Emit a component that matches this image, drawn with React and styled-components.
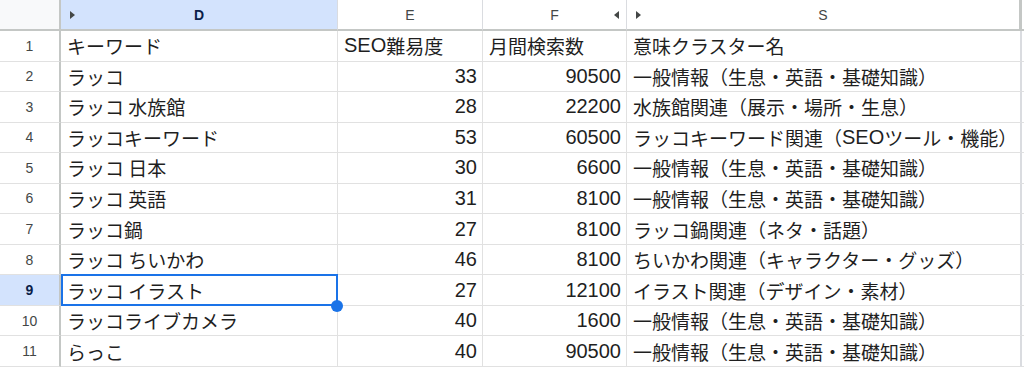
import React from "react";
import styled, { createGlobalStyle, css } from "styled-components";

const Global = createGlobalStyle`
  html, body { margin: 0; padding: 0; background: #fff; }
  body { overflow: hidden; }
  * { box-sizing: border-box; }
`;

const Sheet = styled.div`
  display: grid;
  grid-template-columns: 61px 277px 145px 144px 395px 1fr;
  grid-template-rows: 31px repeat(11, 1fr);
  width: 1024px;
  height: 367px;
  font-family: "Noto Sans CJK JP", "Liberation Sans", sans-serif;
  color: #1f1f1f;
  overflow: hidden;
`;

const Corner = styled.div`
  background: #f8f9fa;
  border-right: 2px solid #c4c7c5;
  border-bottom: 2px solid #c4c7c5;
`;

const ColHead = styled.div`
  position: relative;
  display: flex;
  align-items: center;
  justify-content: center;
  font-family: "Liberation Sans", Arial, sans-serif;
  font-size: 14px;
  color: #444746;
  background: #fff;
  border-right: 1px solid #dadce0;
  border-bottom: 2px solid #c4c7c5;
  ${(p) =>
    p.$active &&
    css`
      background: #d3e3fd;
      color: #0b1e49;
      font-weight: bold;
    `}
  ${(p) =>
    p.$edge &&
    css`
      border-right: 3px solid #c4c7c5;
    `}
`;

const Arrow = styled.span`
  position: absolute;
  top: 50%;
  margin-top: -4px;
  width: 0;
  height: 0;
  border-top: 4px solid transparent;
  border-bottom: 4px solid transparent;
  ${(p) =>
    p.$dir === "right"
      ? css`
          left: 9px;
          border-left: 5px solid #444746;
        `
      : css`
          right: 7px;
          border-right: 5px solid #444746;
        `}
`;

const RowHead = styled.div`
  display: flex;
  align-items: center;
  justify-content: center;
  font-family: "Liberation Sans", Arial, sans-serif;
  font-size: 14px;
  color: #444746;
  background: #fff;
  border-right: 2px solid #c4c7c5;
  border-bottom: 1px solid #e1e1e1;
  ${(p) =>
    p.$active &&
    css`
      background: #d3e3fd;
      color: #0b1e49;
      font-weight: bold;
    `}
`;

const Cell = styled.div`
  position: relative;
  display: flex;
  align-items: center;
  justify-content: ${(p) => (p.$num ? "flex-end" : "flex-start")};
  padding: 0 5px 0 6px;
  font-size: ${(p) => (p.$num ? "20px" : "19px")};
  font-family: ${(p) =>
    p.$num
      ? `"Liberation Sans", Arial, sans-serif`
      : `"Noto Sans CJK JP", "Liberation Sans", sans-serif`};
  color: #1f1f1f;
  white-space: nowrap;
  border-right: 1px solid #e1e1e1;
  border-bottom: 1px solid #e1e1e1;
  ${(p) =>
    p.$edge &&
    css`
      border-right: 2px solid #dadce0;
    `}
  ${(p) =>
    p.$selected &&
    css`
      &::after {
        content: "";
        position: absolute;
        left: 0;
        top: -1px;
        right: -1px;
        bottom: -1px;
        border: 2px solid #1a73e8;
        pointer-events: none;
      }
    `}
`;

const Latin = styled.span`
  font-family: "Liberation Sans", Arial, sans-serif;
  font-size: 20px;
`;

const Handle = styled.span`
  position: absolute;
  right: -6px;
  bottom: -7px;
  width: 12px;
  height: 12px;
  border-radius: 50%;
  background: #1a73e8;
  z-index: 2;
`;

const Filler = styled.div`
  border-bottom: 1px solid #e1e1e1;
  background: #fff;
`;

const HeadFiller = styled.div`
  border-bottom: 2px solid #c4c7c5;
  background: #fff;
`;

function Text({ children }) {
  const parts = String(children).split(/([A-Za-z0-9]+)/);
  return parts.map((part, i) =>
    /^[A-Za-z0-9]+$/.test(part) ? <Latin key={i}>{part}</Latin> : part
  );
}

const rows = [
  ["キーワード", "SEO難易度", "月間検索数", "意味クラスター名", true],
  ["ラッコ", "33", "90500", "一般情報（生息・英語・基礎知識）"],
  ["ラッコ 水族館", "28", "22200", "水族館関連（展示・場所・生息）"],
  ["ラッコキーワード", "53", "60500", "ラッコキーワード関連（SEOツール・機能）"],
  ["ラッコ 日本", "30", "6600", "一般情報（生息・英語・基礎知識）"],
  ["ラッコ 英語", "31", "8100", "一般情報（生息・英語・基礎知識）"],
  ["ラッコ鍋", "27", "8100", "ラッコ鍋関連（ネタ・話題）"],
  ["ラッコ ちいかわ", "46", "8100", "ちいかわ関連（キャラクター・グッズ）"],
  ["ラッコ イラスト", "27", "12100", "イラスト関連（デザイン・素材）"],
  ["ラッコライブカメラ", "40", "1600", "一般情報（生息・英語・基礎知識）"],
  ["らっこ", "40", "90500", "一般情報（生息・英語・基礎知識）"],
];

export default function App() {
  const activeRow = 9;
  return (
    <>
      <Global />
      <Sheet>
        <Corner />
        <ColHead $active>
          <Arrow $dir="right" />D
        </ColHead>
        <ColHead>E</ColHead>
        <ColHead>
          F<Arrow $dir="left" />
        </ColHead>
        <ColHead $edge>
          <Arrow $dir="right" />S
        </ColHead>
        <HeadFiller />
        {rows.map(([d, e, f, s, isHeader], i) => {
          const n = i + 1;
          const sel = n === activeRow;
          return (
            <React.Fragment key={n}>
              <RowHead $active={sel}>{n}</RowHead>
              <Cell $selected={sel}>
                <Text>{d}</Text>
                {sel && <Handle />}
              </Cell>
              <Cell $num={!isHeader}>{isHeader ? <Text>{e}</Text> : e}</Cell>
              <Cell $num={!isHeader}>{isHeader ? <Text>{f}</Text> : f}</Cell>
              <Cell $edge>
                <Text>{s}</Text>
              </Cell>
              <Filler />
            </React.Fragment>
          );
        })}
      </Sheet>
    </>
  );
}
